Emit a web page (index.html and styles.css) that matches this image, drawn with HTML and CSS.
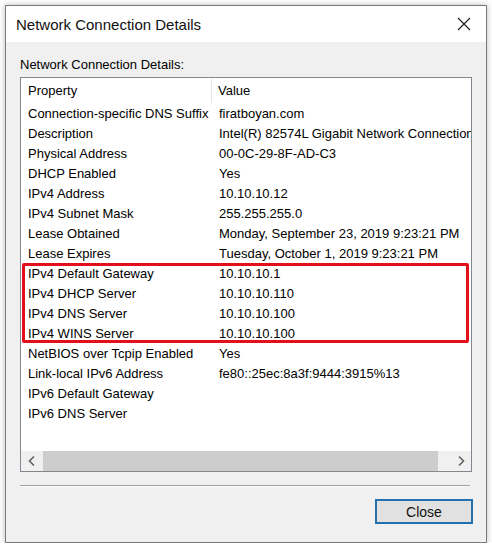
FILE: index.html
```html
<!DOCTYPE html>
<html>
<head>
<meta charset="utf-8">
<link rel="stylesheet" href="styles.css">
</head>
<body>
<div class="window">
  <div class="titlebar">
    <span class="title">Network Connection Details</span>
    <svg class="close-x" width="14" height="14" viewBox="0 0 14 14"><path d="M1 1 L13 13 M13 1 L1 13" stroke="#1a1a1a" stroke-width="1.1" fill="none"/></svg>
  </div>
  <div class="content">
    <div class="label">Network Connection Details:</div>
    <div class="listbox">
      <div class="rows">
        <div class="row header"><div class="c1">Property</div><div class="c2">Value</div></div>
        <div class="row"><div class="c1">Connection-specific DNS Suffix</div><div class="c2">firatboyan.com</div></div>
        <div class="row"><div class="c1">Description</div><div class="c2">Intel(R) 82574L Gigabit Network Connection</div></div>
        <div class="row"><div class="c1">Physical Address</div><div class="c2">00-0C-29-8F-AD-C3</div></div>
        <div class="row"><div class="c1">DHCP Enabled</div><div class="c2">Yes</div></div>
        <div class="row"><div class="c1">IPv4 Address</div><div class="c2">10.10.10.12</div></div>
        <div class="row"><div class="c1">IPv4 Subnet Mask</div><div class="c2">255.255.255.0</div></div>
        <div class="row"><div class="c1">Lease Obtained</div><div class="c2">Monday, September 23, 2019 9:23:21 PM</div></div>
        <div class="row"><div class="c1">Lease Expires</div><div class="c2">Tuesday, October 1, 2019 9:23:21 PM</div></div>
        <div class="row"><div class="c1">IPv4 Default Gateway</div><div class="c2">10.10.10.1</div></div>
        <div class="row"><div class="c1">IPv4 DHCP Server</div><div class="c2">10.10.10.110</div></div>
        <div class="row"><div class="c1">IPv4 DNS Server</div><div class="c2">10.10.10.100</div></div>
        <div class="row"><div class="c1">IPv4 WINS Server</div><div class="c2">10.10.10.100</div></div>
        <div class="row"><div class="c1">NetBIOS over Tcpip Enabled</div><div class="c2">Yes</div></div>
        <div class="row"><div class="c1">Link-local IPv6 Address</div><div class="c2">fe80::25ec:8a3f:9444:3915%13</div></div>
        <div class="row"><div class="c1">IPv6 Default Gateway</div><div class="c2"></div></div>
        <div class="row"><div class="c1">IPv6 DNS Server</div><div class="c2"></div></div>
        <div class="highlight"></div>
      </div>
      <div class="hscroll">
        <div class="sbtn"><svg width="10" height="12" viewBox="0 0 10 12"><path d="M7 1.5 L2.5 6 L7 10.5" stroke="#606060" stroke-width="1.6" fill="none"/></svg></div>
        <div class="thumb"></div>
        <div class="sbtn"><svg width="10" height="12" viewBox="0 0 10 12"><path d="M3 1.5 L7.5 6 L3 10.5" stroke="#606060" stroke-width="1.6" fill="none"/></svg></div>
      </div>
    </div>
    <div class="sep"></div>
    <div class="actions"><button class="btn">Close</button></div>
  </div>
</div>
</body>
</html>
```
FILE: styles.css
```css
html, body {
  margin: 0;
  padding: 0;
  background: #ffffff;
}
body {
  font-family: "Segoe UI", "Liberation Sans", Arial, sans-serif;
  color: #000;
}
.window {
  margin: 5px 0 0 5px;
  width: 480px;
  height: 536px;
  border: 1px solid #7a7a7a;
  background: #f0f0f0;
  box-shadow: 0 0 6px rgba(0, 0, 0, 0.28);
  display: flex;
  flex-direction: column;
}
.titlebar {
  height: 36px;
  background: #fff;
  display: flex;
  align-items: center;
  justify-content: space-between;
  padding: 0 15px 0 10px;
}
.title {
  font-size: 15px;
  color: #111;
}
.close-x {
  display: block;
}
.content {
  flex: 1;
  padding: 14px 14px 0 14px;
  display: flex;
  flex-direction: column;
}
.label {
  font-size: 13px;
  line-height: 18px;
  height: 18px;
  margin-bottom: 3px;
}
.listbox {
  border: 1px solid #828790;
  background: #fff;
  height: 393px;
  display: flex;
  flex-direction: column;
}
.rows {
  position: relative;
  flex: 1;
  overflow: hidden;
}
.row {
  display: flex;
  height: 20px;
  line-height: 20px;
  font-size: 13px;
  white-space: nowrap;
}
.row.header {
  height: 26px;
  line-height: 26px;
}
.c1 {
  width: 184px;
  padding-left: 7px;
  flex: none;
  overflow: hidden;
}
.c2 {
  padding-left: 7px;
}
.header .c1 {
  border-right: 1px solid #e5e5e5;
  width: 183px;
  margin: 1px 0;
  line-height: 24px;
}
.header .c2 {
  padding-left: 6px;
}
.highlight {
  position: absolute;
  left: 1px;
  top: 185px;
  width: 441px;
  height: 74px;
  border: 3px solid #e3101b;
  border-radius: 2px;
}
.hscroll {
  height: 20px;
  background: #f0f0f0;
  display: flex;
  align-items: stretch;
}
.sbtn {
  width: 21px;
  display: flex;
  align-items: center;
  justify-content: center;
  flex: none;
}
.thumb {
  flex: 1;
  background: #cdcdcd;
  margin: 0 12px 0 1px;
}
.sep {
  margin: 13px 2px 0 0;
  height: 1px;
  background: #a0a0a0;
  border-bottom: 1px solid #fdfdfd;
}
.actions {
  display: flex;
  justify-content: flex-end;
  margin-top: 12px;
  margin-right: -1px;
}
.btn {
  width: 98px;
  height: 25px;
  border: 2px solid #2370b0;
  background: #e1e1e1;
  font-family: inherit;
  font-size: 14px;
  color: #111;
  padding: 0;
}
```
